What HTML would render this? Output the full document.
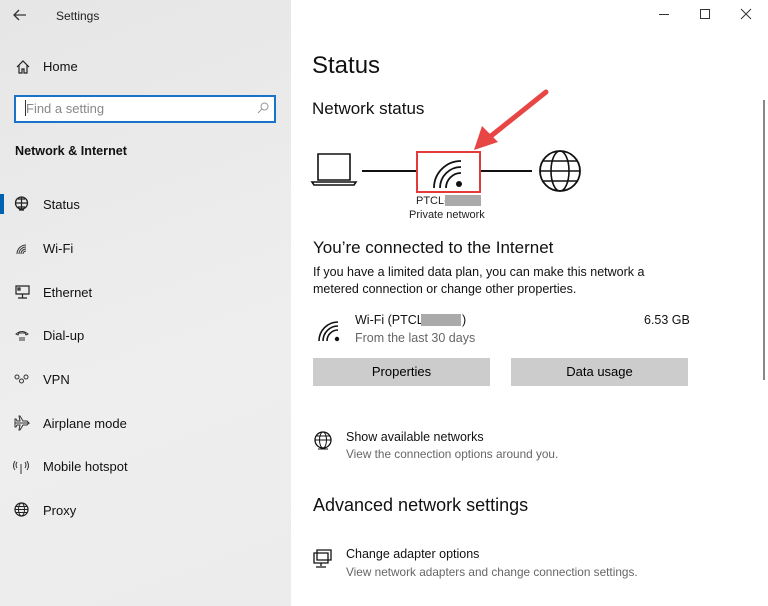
<!DOCTYPE html>
<html><head><meta charset="utf-8"><style>
*{margin:0;padding:0;box-sizing:border-box}
body{width:768px;height:606px;position:relative;overflow:hidden;background:#fff;font-family:"Liberation Sans",sans-serif;color:#000}
.a{position:absolute;white-space:nowrap}
#side{position:absolute;left:0;top:0;width:291px;height:606px;background:linear-gradient(160deg,#e6e6e6,#eeeeee 60%,#ececec)}
.nav{font-size:13px;color:#111}
.g{color:#666}
svg{position:absolute;overflow:visible}
.btn{position:absolute;background:#cccccc;font-size:13px;text-align:center;line-height:28px;height:28px}
</style></head><body>
<div id="side">
<svg style="left:13px;top:9px" width="14" height="12" viewBox="0 0 14 12"><path d="M13 6H1M6 1L1 6l5 5" fill="none" stroke="#333" stroke-width="1.3"/></svg>
<div class="a" style="left:56px;top:9px;font-size:12px;color:#222">Settings</div>
<svg style="left:16px;top:60px" width="14" height="14" viewBox="0 0 14 14"><path d="M1 7L7 1l6 6M3 5v8h3V9h2v4h3V5" fill="none" stroke="#222" stroke-width="1.2"/></svg>
<div class="a nav" style="left:43px;top:59px">Home</div>
<div class="a" style="left:14px;top:95px;width:262px;height:28px;background:#fff;border:2px solid #1a73c8"></div>
<div class="a" style="left:26px;top:101px;font-size:13px;color:#888">Find a setting</div>
<div class="a" style="left:25px;top:100px;width:1px;height:16px;background:#333"></div>
<svg style="left:257px;top:102px" width="12" height="12" viewBox="0 0 12 12"><circle cx="7.5" cy="4.5" r="3.5" fill="none" stroke="#999"/><path d="M5 7l-4 4" stroke="#999"/></svg>
<div class="a" style="left:15px;top:144px;font-size:12.6px;font-weight:bold;color:#111">Network &amp; Internet</div>
<div class="a" style="left:0;top:194px;width:4px;height:20px;background:#0063b1"></div>
<svg style="left:14px;top:196px" width="15" height="15" viewBox="0 0 15 15"><circle cx="7.5" cy="7" r="6" fill="none" stroke="#222" stroke-width="1.3"/><path d="M1.5 7h12M7.5 1v12M4 3h7M4 11h7M5 14h5" fill="none" stroke="#222" stroke-width="1.2"/></svg>
<div class="a nav" style="left:43px;top:197px">Status</div>
<svg style="left:15px;top:243px" width="14" height="12" viewBox="0 0 14 12"><path d="M2 11a9 9 0 0 1 9-9M4 11a7 7 0 0 1 7-7M6 11a5 5 0 0 1 5-5M8 11a3 3 0 0 1 3-3" fill="none" stroke="#333" stroke-width="1"/></svg>
<div class="a nav" style="left:43px;top:241px">Wi-Fi</div>
<svg style="left:15px;top:285px" width="15" height="14" viewBox="0 0 15 14"><path d="M1 1h13v8H1zM7.5 9v4M3 13h9M3 3h2v2H3z" fill="none" stroke="#222" stroke-width="1.2"/></svg>
<div class="a nav" style="left:43px;top:285px">Ethernet</div>
<svg style="left:15px;top:330px" width="14" height="12" viewBox="0 0 14 12"><path d="M1 4q6-5 12 0l-2 1-1-2H4L3 5zM5 7v4M7 7v4M9 7v4" fill="none" stroke="#333" stroke-width="1"/></svg>
<div class="a nav" style="left:43px;top:328px">Dial-up</div>
<svg style="left:14px;top:374px" width="15" height="10" viewBox="0 0 15 10"><circle cx="3" cy="3" r="2" fill="none" stroke="#333"/><circle cx="12" cy="3" r="2" fill="none" stroke="#333"/><circle cx="7.5" cy="7" r="2" fill="none" stroke="#333"/></svg>
<div class="a nav" style="left:43px;top:372px">VPN</div>
<svg style="left:14px;top:415px" width="16" height="16" viewBox="0 0 16 16"><path d="M1 8h14l-2-2H9L6 1H5l1 5H3L2 4H1v8h1l1-2h3l-1 5h1l3-5h4l2-2" fill="none" stroke="#333" stroke-width="1"/></svg>
<div class="a nav" style="left:43px;top:416px">Airplane mode</div>
<svg style="left:13px;top:460px" width="16" height="14" viewBox="0 0 16 14"><path d="M8 4v10M4 2q-2 3 0 6M12 2q2 3 0 6M2 1q-3 5 0 9M14 1q3 5 0 9" fill="none" stroke="#333" stroke-width="1"/></svg>
<div class="a nav" style="left:43px;top:459px">Mobile hotspot</div>
<svg style="left:14px;top:502px" width="15" height="15" viewBox="0 0 15 15"><circle cx="7.5" cy="7.5" r="6.5" fill="none" stroke="#222" stroke-width="1.2"/><ellipse cx="7.5" cy="7.5" rx="3" ry="6.5" fill="none" stroke="#222"/><path d="M1 7.5h13M2 4.5h11M2 10.5h11" stroke="#222"/></svg>
<div class="a nav" style="left:43px;top:503px">Proxy</div>
</div>

<div class="a" style="left:659px;top:14px;width:10px;height:1px;background:#333"></div>
<div class="a" style="left:700px;top:9px;width:10px;height:10px;border:1px solid #333"></div>
<svg style="left:741px;top:9px" width="10" height="10" viewBox="0 0 10 10"><path d="M0 0l10 10M10 0L0 10" stroke="#333"/></svg>
<div class="a" style="left:763px;top:100px;width:2px;height:280px;background:#888"></div>

<div class="a" style="left:312px;top:52px;font-size:24px;color:#111">Status</div>
<div class="a" style="left:312px;top:99px;font-size:17px;color:#111">Network status</div>

<svg style="left:312px;top:152px" width="46" height="34" viewBox="0 0 46 34"><path d="M6 2h32v26H6zM0 30h44l-2 3H2z" fill="none" stroke="#111" stroke-width="1.6"/></svg>
<div class="a" style="left:362px;top:170px;width:55px;height:1.5px;background:#111"></div>
<div class="a" style="left:480px;top:170px;width:52px;height:1.5px;background:#111"></div>
<div class="a" style="left:416px;top:151px;width:65px;height:42px;border:2px solid #e33b3b"></div>
<svg style="left:431px;top:157px" width="34" height="32" viewBox="0 0 34 32"><path d="M3 31A27 27 0 0 1 30 4M9 31A21 21 0 0 1 30 10M15 31A15 15 0 0 1 30 16" fill="none" stroke="#111" stroke-width="1.8"/><circle cx="28" cy="27" r="3" fill="#111"/></svg>
<svg style="left:538px;top:149px" width="44" height="44" viewBox="0 0 44 44"><circle cx="22" cy="22" r="20" fill="none" stroke="#111" stroke-width="1.8"/><ellipse cx="22" cy="22" rx="9" ry="20" fill="none" stroke="#111" stroke-width="1.6"/><path d="M2 22h40M5 12h34M5 32h34" stroke="#111" stroke-width="1.6"/></svg>
<svg style="left:470px;top:88px" width="80" height="70" viewBox="0 0 80 70"><path d="M76 4L16 52" stroke="#e84545" stroke-width="5" stroke-linecap="round"/><path d="M4 62L12 38L28 54Z" fill="#e84545"/></svg>

<div class="a" style="left:416px;top:195px;font-size:11px;color:#222">PTCL-</div>
<div class="a" style="left:445px;top:195px;width:36px;height:11px;background:#aaa"></div>
<div class="a" style="left:409px;top:209px;font-size:11px;color:#222">Private network</div>

<div class="a" style="left:313px;top:238px;font-size:17px;color:#111">You’re connected to the Internet</div>
<div class="a" style="left:313px;top:264px;font-size:12.5px;line-height:17px;color:#111">If you have a limited data plan, you can make this network a<br>metered connection or change other properties.</div>

<svg style="left:317px;top:320px" width="24" height="22" viewBox="0 0 24 22"><path d="M2 21A19 19 0 0 1 21 2M6 21A15 15 0 0 1 21 6M10 21A11 11 0 0 1 21 10" fill="none" stroke="#111" stroke-width="1.6"/><circle cx="20" cy="19" r="2.2" fill="#111"/></svg>
<div class="a" style="left:355px;top:313px;font-size:12.5px;color:#111">Wi-Fi (PTCL</div>
<div class="a" style="left:421px;top:314px;width:40px;height:12px;background:#aaa"></div>
<div class="a" style="left:462px;top:313px;font-size:12.5px;color:#111">)</div>
<div class="a g" style="left:355px;top:331px;font-size:12.5px">From the last 30 days</div>
<div class="a" style="left:644px;top:313px;font-size:12.5px;color:#111">6.53 GB</div>
<div class="btn" style="left:313px;top:358px;width:177px">Properties</div>
<div class="btn" style="left:511px;top:358px;width:177px">Data usage</div>

<svg style="left:313px;top:431px" width="20" height="20" viewBox="0 0 20 20"><circle cx="10" cy="9" r="8" fill="none" stroke="#111" stroke-width="1.3"/><ellipse cx="10" cy="9" rx="3.5" ry="8" fill="none" stroke="#111"/><path d="M2 9h16M3 5h14M5 18h10" stroke="#111"/></svg>
<div class="a" style="left:346px;top:430px;font-size:12.5px;color:#111">Show available networks</div>
<div class="a g" style="left:346px;top:447px;font-size:11.8px">View the connection options around you.</div>

<div class="a" style="left:313px;top:495px;font-size:18px;color:#111">Advanced network settings</div>

<svg style="left:313px;top:549px" width="20" height="20" viewBox="0 0 20 20"><path d="M4 1h14v10H4zM1 4h14v10H1zM8 14v3M3 18h10" fill="#fff" stroke="#111" stroke-width="1.3"/></svg>
<div class="a" style="left:346px;top:547px;font-size:12.5px;color:#111">Change adapter options</div>
<div class="a g" style="left:346px;top:565px;font-size:11.8px">View network adapters and change connection settings.</div>
</body></html>
